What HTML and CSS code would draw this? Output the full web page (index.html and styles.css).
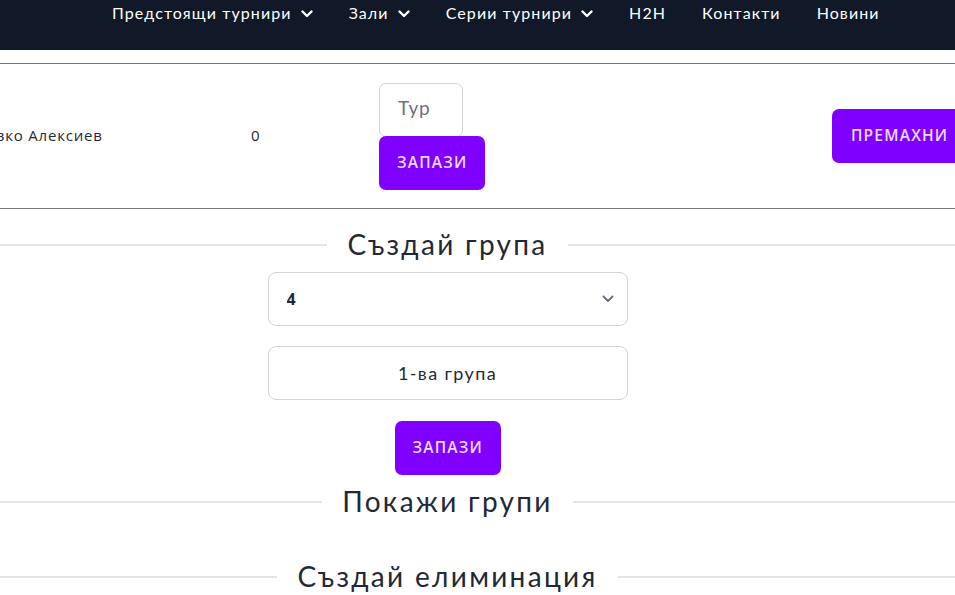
FILE: index.html
```html
<!DOCTYPE html>
<html lang="bg">
<head>
<meta charset="utf-8">
<title>Турнир</title>
<link rel="stylesheet" href="styles.css">
</head>
<body>
<header class="topbar">
  <nav class="nav">
    <a class="nav-item">Предстоящи турнири <svg class="caret" viewBox="0 0 12 8"><path d="M1.5 1.5 6 6l4.5-4.5" fill="none" stroke="currentColor" stroke-width="2.4" stroke-linecap="round" stroke-linejoin="round"/></svg></a>
    <a class="nav-item">Зали <svg class="caret" viewBox="0 0 12 8"><path d="M1.5 1.5 6 6l4.5-4.5" fill="none" stroke="currentColor" stroke-width="2.4" stroke-linecap="round" stroke-linejoin="round"/></svg></a>
    <a class="nav-item">Серии турнири <svg class="caret" viewBox="0 0 12 8"><path d="M1.5 1.5 6 6l4.5-4.5" fill="none" stroke="currentColor" stroke-width="2.4" stroke-linecap="round" stroke-linejoin="round"/></svg></a>
    <a class="nav-item">H2H</a>
    <a class="nav-item">Контакти</a>
    <a class="nav-item">Новини</a>
  </nav>
</header>

<main class="page">
  <div class="table-wrap">
    <div class="table-row">
      <div class="cell cell-name">Славко Алексиев</div>
      <div class="cell cell-score">0</div>
      <div class="cell cell-round">
        <input class="round-input" type="text" placeholder="Тур">
        <button class="btn">Запази</button>
      </div>
      <div class="cell cell-remove">
        <button class="btn btn-remove">Премахни</button>
      </div>
    </div>
  </div>

  <h2 class="section-title">Създай група</h2>
  <form class="group-form">
    <div class="select-wrap">
      <select class="field field-select">
        <option>4</option>
      </select>
      <svg class="select-caret" viewBox="0 0 12 8"><path d="M1.5 1.5 6 6l4.5-4.5" fill="none" stroke="currentColor" stroke-width="2" stroke-linecap="round" stroke-linejoin="round"/></svg>
    </div>
    <input class="field field-text" type="text" value="1-ва група">
    <button class="btn" type="button">Запази</button>
  </form>

  <h2 class="section-title title-show">Покажи групи</h2>
  <h2 class="section-title title-elim">Създай елиминация</h2>
</main>
</body>
</html>
```

FILE: styles.css
```css
* { box-sizing: border-box; }

html, body {
  margin: 0;
  padding: 0;
  background: #ffffff;
  overflow: hidden;
}

body {
  font-family: "Noto Sans", "Open Sans", sans-serif;
  color: #1f2937;
  width: 955px;
  height: 595px;
}

.topbar {
  background: #111827;
  height: 50px;
}

.nav {
  display: flex;
  align-items: flex-start;
  padding-left: 112px;
  padding-top: 3px;
  gap: 36px;
}

.nav-item {
  color: #ffffff;
  font-family: "Lato", "Noto Sans", sans-serif;
  font-size: 16px;
  letter-spacing: 1.1px;
  line-height: 20px;
  display: flex;
  align-items: center;
  gap: 9px;
  white-space: nowrap;
}

.caret {
  width: 12px;
  height: 8px;
  margin-top: 1px;
}

/* The scrolled view: content column is wider than the window and shifted left */
.page {
  display: flex;
  flex-direction: column;
  align-items: stretch;
  width: 1015px;
  margin-left: -60px;
}

.table-wrap {
  margin-top: 13px;
  border-top: 1px solid #777777;
  border-bottom: 1px solid #777777;
  overflow: hidden;
}

.table-row {
  display: grid;
  grid-template-columns: 284px 128px 453px 160px;
  margin-left: 27px;
  height: 144px;
  align-items: center;
  font-family: "Open Sans", "Noto Sans", sans-serif;
  font-size: 15px;
  letter-spacing: 0.8px;
  color: #1f2937;
}

.cell-name,
.cell-score {
  padding-bottom: 3px;
}

.cell-round {
  display: flex;
  flex-direction: column;
  align-items: flex-start;
}

.round-input {
  width: 84px;
  height: 54px;
  border: 1px solid #d4d4d8;
  border-radius: 7px;
  padding: 0 0 4px 18px;
  font-family: "Lato", "Noto Sans", sans-serif;
  font-size: 19px;
  letter-spacing: 0.8px;
  color: #6b7280;
  outline: none;
  background: #ffffff;
}

.round-input::placeholder {
  color: #6b7280;
}

.btn {
  background: #7f00ff;
  color: #ecdcff;
  border: none;
  border-radius: 7px;
  height: 54px;
  padding: 0 18px 2px;
  font-family: "Open Sans", "Noto Sans", sans-serif;
  font-size: 15.5px;
  font-weight: 600;
  letter-spacing: 1.2px;
  text-transform: uppercase;
  cursor: pointer;
}

.cell-round .btn {
  width: 106px;
  margin-top: -1px;
}

.btn-remove {
  width: 140px;
  text-align: left;
  padding-left: 19px;
}

.section-title {
  display: flex;
  align-items: center;
  gap: 20px;
  margin: 18px 0 0;
  height: 34px;
  font-family: "Lato", "Noto Sans", sans-serif;
  font-weight: 400;
  font-size: 28px;
  letter-spacing: 2.3px;
  color: #1f2937;
  white-space: nowrap;
}

.section-title::before,
.section-title::after {
  content: "";
  flex: 1;
  height: 2px;
  margin-top: 2px;
  background: #e5e5e5;
}

.group-form {
  display: flex;
  flex-direction: column;
  align-items: center;
  margin-top: 11px;
}

.select-wrap {
  position: relative;
  width: 360px;
}

.field {
  width: 360px;
  height: 54px;
  border: 1px solid #d4d4d8;
  border-radius: 8px;
  background: #ffffff;
  font-size: 18px;
  color: #1f2937;
  outline: none;
}

.field-select {
  display: block;
  appearance: none;
  -webkit-appearance: none;
  padding-left: 18px;
  font-family: "Open Sans", "Noto Sans", sans-serif;
  font-weight: 700;
  font-size: 16px;
}

.select-caret {
  position: absolute;
  right: 14px;
  top: 23px;
  width: 12px;
  height: 8px;
  color: #6b7280;
  pointer-events: none;
}

.field-text {
  margin-top: 20px;
  text-align: center;
  font-family: "Lato", "Noto Sans", sans-serif;
  letter-spacing: 1.4px;
}

.group-form .btn {
  width: 106px;
  margin-top: 21px;
}

.title-show {
  margin-top: 9px;
}

.title-elim {
  margin-top: 41px;
}
```
